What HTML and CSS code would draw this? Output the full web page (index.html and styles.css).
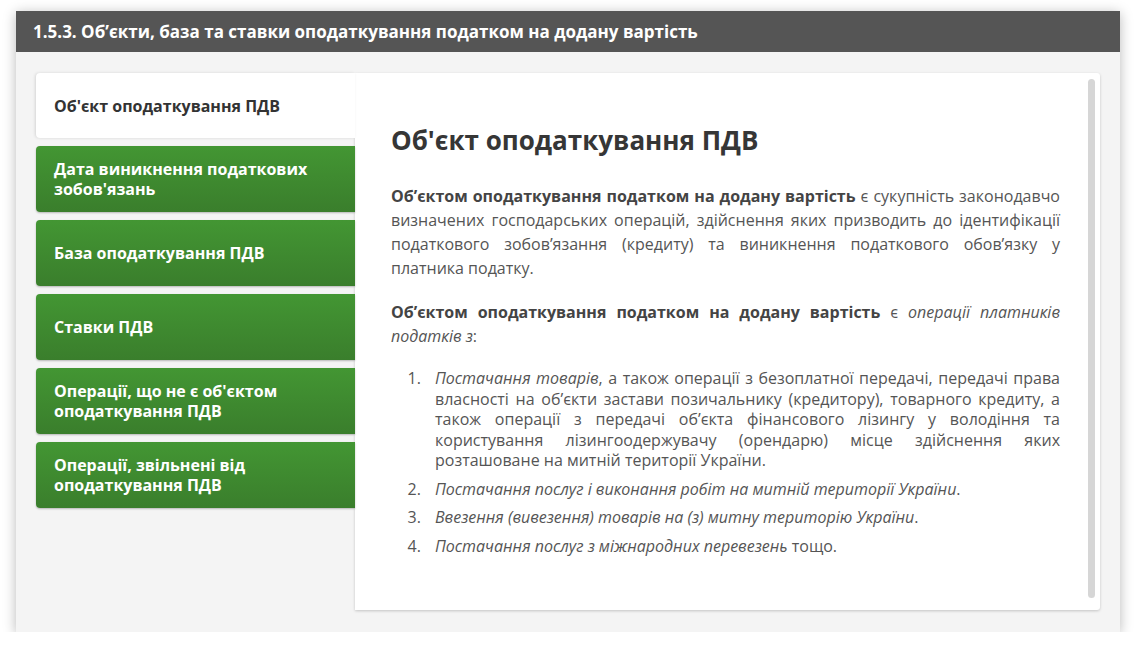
FILE: index.html
```html
<!DOCTYPE html>
<html lang="uk">
<head>
<meta charset="utf-8">
<title>1.5.3</title>
<link rel="stylesheet" href="styles.css">
</head>
<body>
<div class="card">
  <div class="card-header">1.5.3. Об’єкти, база та ставки оподаткування податком на додану вартість</div>
  <div class="card-body">
    <div class="tabs">
      <div class="tab active">Об'єкт оподаткування ПДВ</div>
      <div class="tab">Дата виникнення податкових зобов'язань</div>
      <div class="tab">База оподаткування ПДВ</div>
      <div class="tab">Ставки ПДВ</div>
      <div class="tab">Операції, що не є об'єктом оподаткування ПДВ</div>
      <div class="tab">Операції, звільнені від оподаткування ПДВ</div>
    </div>
    <div class="content">
      <h2 class="title">Об'єкт оподаткування ПДВ</h2>
      <p class="para"><b>Об’єктом оподаткування податком на додану вартість</b> є сукупність законодавчо визначених господарських операцій, здійснення яких призводить до ідентифікації податкового зобов’язання (кредиту) та виникнення податкового обов’язку у платника податку.</p>
      <p class="para"><b>Об’єктом оподаткування податком на додану вартість</b> є <i>операції платників податків з</i>:</p>
      <ol class="list">
        <li><i>Постачання товарів</i>, а також операції з безоплатної передачі, передачі права власності на об’єкти застави позичальнику (кредитору), товарного кредиту, а також операції з передачі об’єкта фінансового лізингу у володіння та користування лізингоодержувачу (орендарю) місце здійснення яких розташоване на митній території України.</li>
        <li><i>Постачання послуг і виконання робіт на митній території України</i>.</li>
        <li><i>Ввезення (вивезення) товарів на (з) митну територію України</i>.</li>
        <li><i>Постачання послуг з міжнародних перевезень</i> тощо.</li>
      </ol>
      <div class="scroll-thumb"></div>
    </div>
  </div>
</div>
</body>
</html>
```
FILE: styles.css
```css
* { box-sizing: border-box; }
html, body { margin: 0; padding: 0; background: #ffffff; }
body {
  font-family: "Open Sans", "Noto Sans", sans-serif;
  padding: 11px 16px 0 16px;
}
.card {
  width: 1104px;
  height: 621px;
  background: #f4f4f4;
  box-shadow: 0 2px 12px rgba(0, 0, 0, 0.28);
  display: flex;
  flex-direction: column;
}
.card-header {
  height: 41px;
  background: #555555;
  color: #ffffff;
  font-weight: 700;
  font-size: 17px;
  line-height: 41px;
  padding-left: 17px;
  flex: none;
}
.card-body {
  flex: 1;
  display: flex;
  padding: 21px 20px 22px 20px;
}
.tabs {
  width: 319px;
  flex: none;
  display: flex;
  flex-direction: column;
  gap: 8px;
  position: relative;
  z-index: 2;
}
.tab {
  height: 66px;
  border-radius: 4px 0 0 4px;
  background: linear-gradient(#439633, #3a7e2c);
  color: #ffffff;
  font-weight: 700;
  font-size: 16px;
  line-height: 20px;
  padding: 0 18px;
  display: flex;
  align-items: center;
  box-shadow: 0 1px 2px rgba(0, 0, 0, 0.25);
}
.tab.active {
  height: 65px;
  background: #ffffff;
  color: #333333;
  box-shadow: -1px 0 3px rgba(0, 0, 0, 0.12);
}
.content {
  flex: 1;
  background: #ffffff;
  position: relative;
  border-radius: 0 3px 3px 0;
  box-shadow: 0 1px 3px rgba(0, 0, 0, 0.2);
  padding: 52px 40px 0 36px;
  color: #555555;
  font-size: 16px;
}
.title {
  margin: 0 0 29px 0;
  font-size: 26px;
  line-height: 30px;
  font-weight: 700;
  color: #363636;
}
.para {
  margin: 0 0 20px 0;
  line-height: 24px;
  text-align: justify;
}
.para b { color: #444444; }
.list {
  margin: 0;
  padding-left: 34px;
  line-height: 20.5px;
  text-align: justify;
}
.list li { margin-bottom: 8px; padding-left: 10px; }
.scroll-thumb {
  position: absolute;
  right: 5px;
  top: 6px;
  bottom: 12px;
  width: 7px;
  border-radius: 4px;
  background: #d6d6d6;
}
```
